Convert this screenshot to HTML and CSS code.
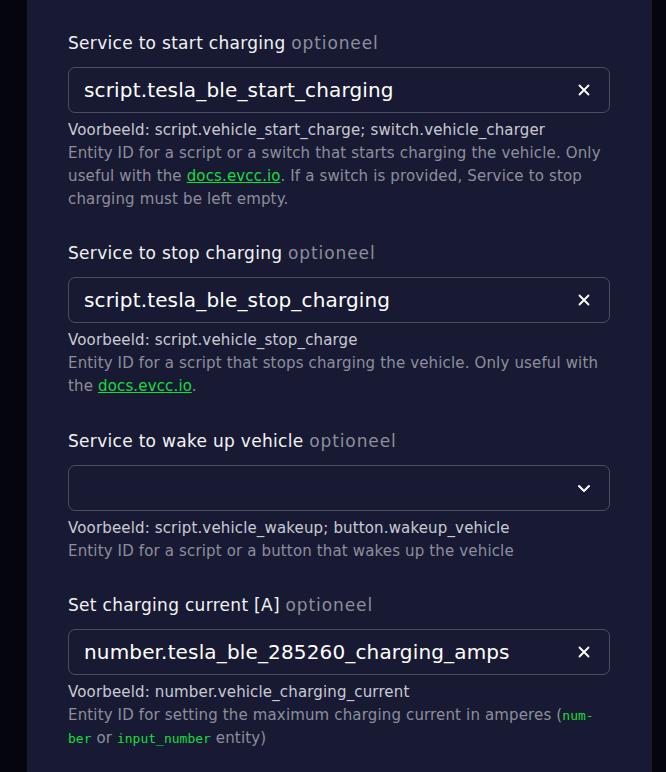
FILE: index.html
```html
<!DOCTYPE html>
<html>
<head>
<meta charset="utf-8">
<link rel="stylesheet" href="styles.css">
</head>
<body>
<div class="page">
  <div class="panel">
    <div class="field">
      <label class="label">Service to start charging <span class="opt">optioneel</span></label>
      <div class="input">
        <span class="value">script.tesla_ble_start_charging</span>
        <svg class="icon" viewBox="0 0 16 16" width="16" height="16"><path d="M3.5 3.5l9 9M12.5 3.5l-9 9" stroke="#fff" stroke-width="1.8" stroke-linecap="round" fill="none"/></svg>
      </div>
      <div class="example">Voorbeeld: script.vehicle_start_charge; switch.vehicle_charger</div>
      <div class="help">Entity ID for a script or a switch that starts charging the vehicle. Only useful with the <a class="link" href="#">docs.evcc.io</a>. If a switch is provided, Service to stop charging must be left empty.</div>
    </div>
    <div class="field">
      <label class="label">Service to stop charging <span class="opt">optioneel</span></label>
      <div class="input">
        <span class="value">script.tesla_ble_stop_charging</span>
        <svg class="icon" viewBox="0 0 16 16" width="16" height="16"><path d="M3.5 3.5l9 9M12.5 3.5l-9 9" stroke="#fff" stroke-width="1.8" stroke-linecap="round" fill="none"/></svg>
      </div>
      <div class="example">Voorbeeld: script.vehicle_stop_charge</div>
      <div class="help">Entity ID for a script that stops charging the vehicle. Only useful with the <a class="link" href="#">docs.evcc.io</a>.</div>
    </div>
    <div class="field">
      <label class="label">Service to wake up vehicle <span class="opt">optioneel</span></label>
      <div class="input">
        <span class="value"></span>
        <svg class="icon" viewBox="0 0 16 16" width="16" height="16"><path d="M3 6l5 5 5-5" stroke="#fff" stroke-width="2" stroke-linecap="round" stroke-linejoin="round" fill="none"/></svg>
      </div>
      <div class="example">Voorbeeld: script.vehicle_wakeup; button.wakeup_vehicle</div>
      <div class="help">Entity ID for a script or a button that wakes up the vehicle</div>
    </div>
    <div class="field">
      <label class="label">Set charging current [A] <span class="opt">optioneel</span></label>
      <div class="input">
        <span class="value">number.tesla_ble_285260_charging_amps</span>
        <svg class="icon" viewBox="0 0 16 16" width="16" height="16"><path d="M3.5 3.5l9 9M12.5 3.5l-9 9" stroke="#fff" stroke-width="1.8" stroke-linecap="round" fill="none"/></svg>
      </div>
      <div class="example">Voorbeeld: number.vehicle_charging_current</div>
      <div class="help"><span class="nowrap">Entity ID for setting the maximum charging current in amperes (<code class="code">num-</code></span><br><code class="code">ber</code> or <code class="code">input_number</code> entity)</div>
    </div>
  </div>
</div>
</body>
</html>
```
FILE: styles.css
```css
html, body {
  margin: 0;
  padding: 0;
  background: #05050d;
  height: 100%;
  overflow: hidden;
}
.page {
  display: flex;
  height: 772px;
}
.panel {
  margin-left: 27px;
  width: 625px;
  box-sizing: border-box;
  background: #181a33;
  padding: 32px 42px 0 41px;
  font-family: "DejaVu Sans", sans-serif;
  display: flex;
  flex-direction: column;
  gap: 31.3px;
}
.field {
  display: flex;
  flex-direction: column;
}
.label {
  color: #f2f2f4;
  font-size: 17px;
  letter-spacing: 0.3px;
  line-height: 22px;
  margin-bottom: 13px;
}
.opt {
  color: #8d8e9c;
  letter-spacing: 0.9px;
}
.input {
  height: 46px;
  box-sizing: border-box;
  border: 1px solid #4b4d62;
  border-radius: 7px;
  display: flex;
  align-items: center;
  justify-content: space-between;
  padding: 0 17px 0 15px;
}
.value {
  color: #ffffff;
  font-size: 20px;
  letter-spacing: 0.15px;
}
.icon {
  display: block;
}
.example {
  color: #c9cad2;
  font-size: 15px;
  letter-spacing: 0.15px;
  line-height: 23px;
  margin-top: 6px;
}
.help {
  color: #8d8e9c;
  font-size: 15px;
  letter-spacing: 0.15px;
  line-height: 23px;
}
.nowrap {
  white-space: nowrap;
}
.link {
  color: #0fdf3d;
  text-decoration: underline;
}
.code {
  color: #0fdf3d;
  font-family: "DejaVu Sans Mono", monospace;
  font-size: 13px;
  line-height: 1;
  letter-spacing: 0;
}
```
